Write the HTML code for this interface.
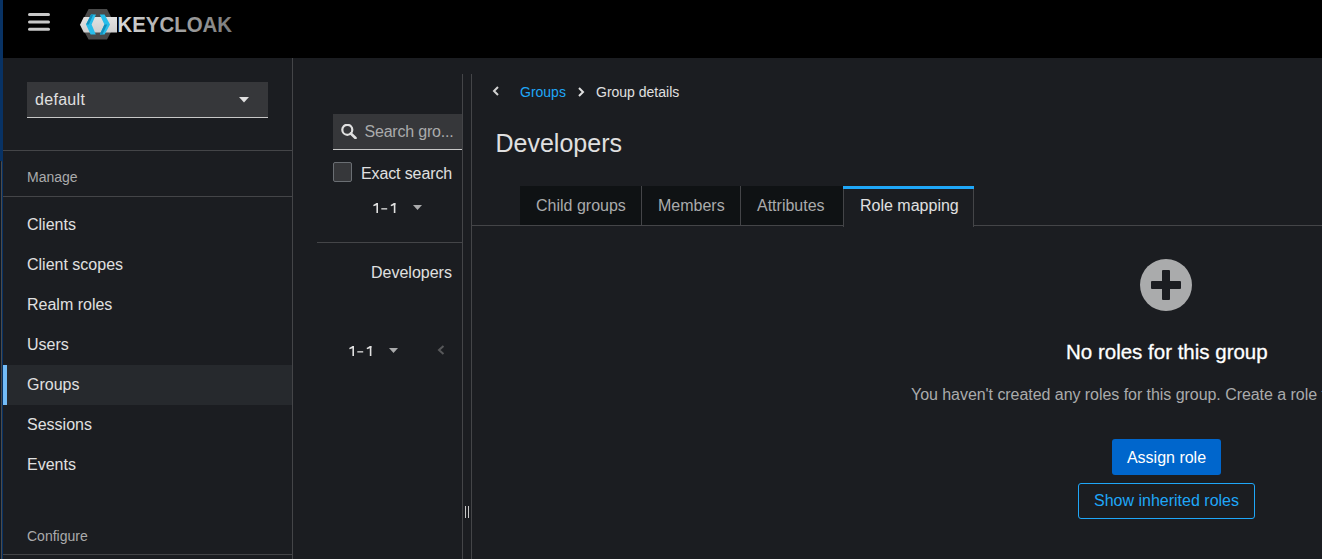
<!DOCTYPE html>
<html><head><meta charset="utf-8">
<style>
*{margin:0;padding:0;box-sizing:border-box}
html,body{width:1322px;height:559px;overflow:hidden;background:#1b1d21;font-family:"Liberation Sans",sans-serif;color:#e0e0e0}
.a{position:absolute;white-space:nowrap}
.t16{font-size:16px;line-height:16px}
.t14{font-size:14px;line-height:14px}
</style></head><body>
<!-- header -->
<div class="a" style="left:0;top:0;width:1322px;height:58px;background:#000"></div>
<!-- hamburger -->
<svg class="a" style="left:0;top:0" width="60" height="40" viewBox="0 0 60 40"><g fill="#c9c9c9"><rect x="28" y="12.9" width="22" height="3" rx="1.5"/><rect x="28" y="20.4" width="22" height="3.1" rx="1.5"/><rect x="28" y="27.8" width="22" height="3" rx="1.5"/></g></svg>
<!-- logo -->
<svg class="a" style="left:76px;top:6px" width="162" height="40" viewBox="76 6 162 40">
  <defs>
    <linearGradient id="tg" x1="0" x2="1" y1="0" y2="0">
      <stop offset="0" stop-color="#dadada"/><stop offset="0.45" stop-color="#a9a9a9"/><stop offset="1" stop-color="#7c7c7c"/>
    </linearGradient>
    <linearGradient id="bg" x1="0" x2="0" y1="0" y2="1">
      <stop offset="0" stop-color="#e2e2e2"/><stop offset="1" stop-color="#cfcfcf"/>
    </linearGradient>
  </defs>
  <polygon points="88.6,9 107,9 115,24.7 107,39.6 88.6,39.6 80.5,24.7" fill="#4a4a4a"/>
  <polygon points="83.8,17 117,17 117,32.5 83.8,32.5 80,24.7" fill="url(#bg)"/>
  <polygon points="91,14.5 96,14.5 91.6,24.6 95.8,34.6 90.6,34.6 86,24.6" fill="#28bdea"/><polygon points="91,14.5 93.4,14.5 88.8,24.6 86,24.6" fill="#128fbb"/>
  <polygon points="99.8,14.5 104.6,14.5 110,24.6 104.6,34.6 99.8,34.6 104.4,24.6" fill="#28bdea"/><polygon points="104.4,24.6 107.2,24.6 102.4,34.6 99.8,34.6" fill="#128fbb"/>
  <text x="117.5" y="32.2" font-family="Liberation Sans" font-weight="bold" font-size="21.9" textLength="114.6" lengthAdjust="spacingAndGlyphs" fill="url(#tg)">KEYCLOAK</text>
</svg>

<!-- left strip -->
<div class="a" style="left:0;top:0;width:3px;height:161px;background:#083264"></div>
<div class="a" style="left:0;top:161px;width:1px;height:398px;background:#0e1723"></div>
<div class="a" style="left:1px;top:161px;width:1px;height:398px;background:#4a4b4d;border-top-left-radius:1px"></div>
<div class="a" style="left:2px;top:161px;width:1px;height:398px;background:#083264"></div>

<!-- sidebar -->
<div class="a" style="left:292px;top:58px;width:1px;height:501px;background:#444548"></div>
<div class="a" style="left:27px;top:82px;width:241px;height:36px;background:#36373a;border-bottom:1px solid #c7c7c7"></div>
<div class="a t16" style="left:35px;top:91.5px;color:#e0e0e0;letter-spacing:0.3px">default</div>
<svg class="a" style="left:239px;top:97px" width="10" height="6" viewBox="0 0 10 6"><polygon points="0,0 10,0 5,5.5" fill="#e0e0e0"/></svg>
<div class="a" style="left:3px;top:150px;width:289px;height:1px;background:#444548"></div>
<div class="a t14" style="left:27px;top:169.5px;color:#aaabac">Manage</div>
<div class="a" style="left:3px;top:196px;width:289px;height:1px;background:#444548"></div>
<div class="a t16" style="left:27px;top:217px">Clients</div>
<div class="a t16" style="left:27px;top:257px">Client scopes</div>
<div class="a t16" style="left:27px;top:297px">Realm roles</div>
<div class="a t16" style="left:27px;top:337px">Users</div>
<div class="a" style="left:3px;top:365px;width:289px;height:40px;background:#26292d"></div>
<div class="a" style="left:3px;top:365px;width:4px;height:40px;background:#73bcf7"></div>
<div class="a t16" style="left:27px;top:377px">Groups</div>
<div class="a t16" style="left:27px;top:417px">Sessions</div>
<div class="a t16" style="left:27px;top:457px">Events</div>
<div class="a t14" style="left:27px;top:529px;color:#aaabac">Configure</div>
<div class="a" style="left:3px;top:554px;width:289px;height:1px;background:#444548"></div>

<!-- middle panel -->
<div class="a" style="left:333px;top:114px;width:129px;height:36px;background:#36373a;border-bottom:1px solid #c7c7c7"></div>
<svg class="a" style="left:341px;top:124px" width="16" height="15" viewBox="0 0 16 15"><circle cx="6.3" cy="5.8" r="5" fill="none" stroke="#e0e0e0" stroke-width="2.2"/><line x1="9.8" y1="9.5" x2="14.5" y2="14" stroke="#e0e0e0" stroke-width="2.6" stroke-linecap="round"/></svg>
<div class="a t16" style="left:364.5px;top:123.5px;color:#aaabac;letter-spacing:-0.2px">Search gro...</div>
<div class="a" style="left:333px;top:162px;width:19px;height:20px;background:#36373a;border:1px solid #6a6e73;border-radius:2px"></div>
<div class="a t16" style="left:361px;top:166px;letter-spacing:-0.12px">Exact search</div>
<svg class="a" style="left:372.9px;top:202.9px" width="24" height="11" viewBox="0 0 24 11"><g fill="#e0e0e0"><rect x="3.4" y="0" width="1.6" height="10"/><polygon points="3.6,0 5,0 5,1.7 0.6,3.3 0.2,2.1"/><rect x="8.3" y="5.2" width="5.9" height="1.3"/><rect x="20.8" y="0" width="1.6" height="10"/><polygon points="21,0 22.4,0 22.4,1.7 18,3.3 17.6,2.1"/></g></svg>
<svg class="a" style="left:413px;top:205px" width="10" height="6" viewBox="0 0 10 6"><polygon points="0,0 9,0 4.5,5" fill="#aaabac"/></svg>
<div class="a" style="left:317px;top:242px;width:145px;height:1px;background:#444548"></div>
<div class="a t16" style="left:371px;top:264.5px">Developers</div>
<svg class="a" style="left:348.6px;top:345.5px" width="24" height="11" viewBox="0 0 24 11"><g fill="#e0e0e0"><rect x="3.4" y="0" width="1.6" height="10"/><polygon points="3.6,0 5,0 5,1.7 0.6,3.3 0.2,2.1"/><rect x="8.3" y="5.2" width="5.9" height="1.3"/><rect x="20.8" y="0" width="1.6" height="10"/><polygon points="21,0 22.4,0 22.4,1.7 18,3.3 17.6,2.1"/></g></svg>
<svg class="a" style="left:389px;top:348px" width="10" height="6" viewBox="0 0 10 6"><polygon points="0,0 9,0 4.5,5" fill="#aaabac"/></svg>
<svg class="a" style="left:437px;top:345px" width="8" height="10" viewBox="0 0 8 10"><polyline points="6.5,1 2,5 6.5,9" fill="none" stroke="#57585a" stroke-width="2"/></svg>
<div class="a" style="left:462px;top:74px;width:1px;height:485px;background:#444548"></div>
<div class="a" style="left:471px;top:74px;width:1px;height:485px;background:#444548"></div>
<div class="a" style="left:465px;top:506px;width:1px;height:12px;background:#c7c7c7"></div>
<div class="a" style="left:468px;top:506px;width:1px;height:12px;background:#c7c7c7"></div>

<!-- main -->
<svg class="a" style="left:492px;top:86px" width="8" height="10" viewBox="0 0 8 10"><polyline points="6,1 2,5 6,9" fill="none" stroke="#d2d2d2" stroke-width="2"/></svg>
<div class="a t14" style="left:520px;top:85px;color:#1fa7f8">Groups</div>
<svg class="a" style="left:577px;top:87px" width="8" height="10" viewBox="0 0 8 10"><polyline points="2,1 6,5 2,9" fill="none" stroke="#e0e0e0" stroke-width="2"/></svg>
<div class="a t14" style="left:596px;top:85px">Group details</div>
<div class="a" style="left:495.5px;top:130.8px;font-size:25px;line-height:25px">Developers</div>

<!-- tabs -->
<div class="a" style="left:472px;top:225px;width:850px;height:1px;background:#444548"></div>
<div class="a" style="left:520px;top:186px;width:324px;height:39px;background:#0f1214"></div>
<div class="a" style="left:641px;top:186px;width:1px;height:39px;background:#444548"></div>
<div class="a" style="left:740px;top:186px;width:1px;height:39px;background:#444548"></div>
<div class="a t16" style="left:536px;top:198px;color:#aaabac">Child groups</div>
<div class="a t16" style="left:658px;top:198px;color:#aaabac">Members</div>
<div class="a t16" style="left:757px;top:198px;color:#aaabac">Attributes</div>
<div class="a" style="left:843px;top:186px;width:131px;height:41px;background:#1b1d21;border-left:1px solid #444548;border-right:1px solid #444548"></div>
<div class="a" style="left:843px;top:186px;width:131px;height:3px;background:#1fa7f8"></div>
<div class="a t16" style="left:860px;top:198px">Role mapping</div>

<!-- empty state -->
<div class="a" style="left:1140px;top:259px;width:52px;height:52px;border-radius:50%;background:#aaabac"></div>
<div class="a" style="left:1162px;top:270px;width:8px;height:30px;background:#1b1d21;border-radius:1px"></div>
<div class="a" style="left:1151px;top:281px;width:30px;height:8px;background:#1b1d21;border-radius:1px"></div>
<div class="a" style="left:1066px;top:341.5px;font-size:20.5px;line-height:20.5px;color:#fff;-webkit-text-stroke:0.3px #fff">No roles for this group</div>
<div class="a t16" style="left:911px;top:387px;letter-spacing:-0.05px;color:#aaabac">You haven't created any roles for this group. Create a role to get started.</div>
<div class="a t16" style="left:1112px;top:439px;width:109px;height:36px;background:#0066cc;border-radius:3px;color:#fff;line-height:38px;text-align:center">Assign role</div>
<div class="a t16" style="left:1078px;top:483px;width:177px;height:36px;border:1px solid #1fa7f8;border-radius:3px;color:#1fa7f8;line-height:34px;text-align:center">Show inherited roles</div>
</body></html>
